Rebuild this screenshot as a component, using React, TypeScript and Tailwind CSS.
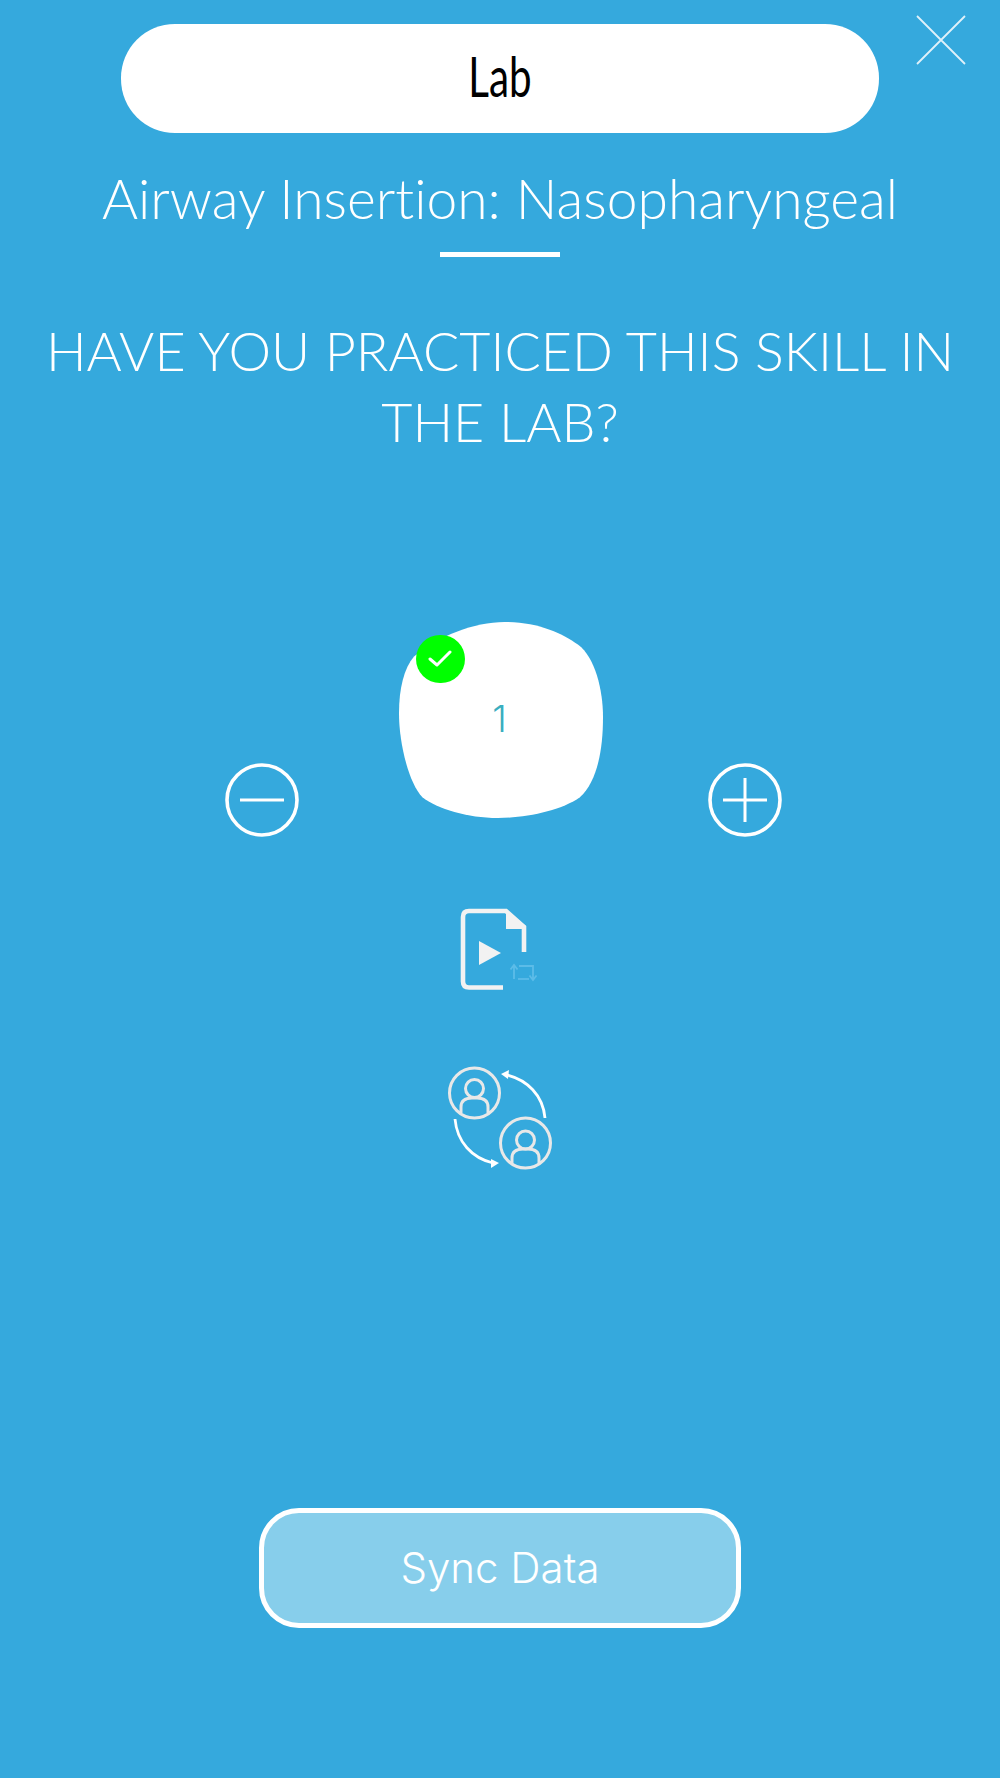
export default function App() {
  return (
    <div className="relative w-[1000px] h-[1778px] bg-[#35a9dd] flex flex-col items-center text-white font-['Lato',sans-serif] overflow-hidden [font-variant-ligatures:none]">
      <svg className="absolute left-[916px] top-[15px]" width="50" height="50" viewBox="0 0 50 50" fill="none" stroke="#dff1fa" strokeWidth="1.8">
        <path d="M1 1 L49 49 M49 1 L1 49" />
      </svg>
      <div className="mt-[24px] w-[758px] h-[109px] rounded-[54px] bg-white flex items-center justify-center">
        <span className="text-black text-[56px] leading-none font-normal scale-x-[0.72] -translate-y-[3px]">Lab</span>
      </div>
      <h1 className="mt-[28px] text-[55.2px] leading-[74px] font-light whitespace-nowrap">Airway Insertion: Nasopharyngeal</h1>
      <div className="mt-[17px] w-[120px] h-[5px] bg-white" />
      <h2 className="mt-[58px] w-[930px] text-center text-[53.8px] leading-[71px] font-light">HAVE YOU PRACTICED THIS SKILL IN THE LAB?</h2>
      <div className="mt-[165px] flex items-start translate-x-[3px]">
        <svg className="mt-[141px] mr-[100px]" width="74" height="74" viewBox="0 0 74 74" fill="none" stroke="#fff" strokeWidth="3.6">
          <circle cx="37" cy="37" r="35" />
          <path d="M15 37 H59" strokeWidth="3" />
        </svg>
        <div className="relative w-[204px] h-[196px] flex items-center justify-center">
          <svg className="absolute left-0 top-0" width="204" height="196" viewBox="55 67 609 585" preserveAspectRatio="none">
            <path fill="#fff" d="M370 67 C 470 67, 540 100, 590 135 C 640 172, 664 270, 664 350 C 664 440, 650 540, 595 590 C 540 630, 430 652, 350 652 C 260 652, 170 625, 125 590 C 85 550, 55 430, 55 340 C 55 265, 70 205, 100 170 C 170 110, 280 67, 370 67 Z" />
          </svg>
          <span className="relative text-[37px] leading-none font-['Inter',sans-serif] font-light text-[#3aaebf] -translate-x-[1px] -translate-y-[2px]">1</span>
          <div className="absolute left-[17px] top-[13px] w-[49px] h-[48px] rounded-full bg-[#00ff00] flex items-center justify-center">
            <svg width="24" height="18" viewBox="0 0 24 18" fill="none" stroke="#fff" strokeWidth="3" strokeLinecap="round" strokeLinejoin="round">
              <path d="M2 9 L9 15 L22 2" />
            </svg>
          </div>
        </div>
        <svg className="mt-[141px] ml-[105px]" width="74" height="74" viewBox="0 0 74 74" fill="none" stroke="#fff" strokeWidth="3.6">
          <circle cx="37" cy="37" r="35" />
          <path d="M15 37 H59 M37 15 V59" strokeWidth="3" />
        </svg>
      </div>
      <svg className="mt-[53px]" width="140" height="110" viewBox="0 0 140 110" fill="none">
        <path d="M73 97.5 H39 Q33 97.5 33 91.5 V27 Q33 21 39 21 H76 L94 37 V62" stroke="#f2f2f2" strokeWidth="4.6" />
        <path d="M76 20 V39 H96 V36 Z" fill="#f2f2f2" />
        <path d="M49 51 V75 L71 63 Z" fill="#f2f2f2" />
        <g stroke="#5cbce8" strokeWidth="1.8">
          <path d="M84 89 V76 M80.5 79.5 L84 75 L87.5 79.5" />
          <path d="M89 76 H103 V89 M99.5 85.5 L103 90 L106.5 85.5" />
          <path d="M88 89 H99" />
        </g>
      </svg>
      <svg className="mt-[50px]" width="140" height="130" viewBox="0 0 140 130" fill="none">
        <g stroke="#e8e8e8" strokeWidth="3">
          <circle cx="44.5" cy="43" r="25" />
          <circle cx="44.5" cy="38.5" r="9" />
          <path d="M31 63 V57 Q31 48 42 48 H47 Q58 48 58 57 V63" />
          <circle cx="95.5" cy="93" r="25" />
          <circle cx="95.5" cy="90" r="9" />
          <path d="M82 114 V108 Q82 99 93 99 H98 Q109 99 109 108 V114" />
        </g>
        <path d="M115 68 C113 45 97 30 77 25" stroke="#fff" strokeWidth="2.8" />
        <path d="M71 24 L79 20 L78 29 Z" fill="#fff" />
        <path d="M25 69 C27 92 42 108 63 113" stroke="#fff" strokeWidth="2.8" />
        <path d="M69 113 L61 109 L61 118 Z" fill="#fff" />
      </svg>
      <div className="mt-[328px] w-[482px] h-[120px] rounded-[40px] border-[5px] border-white bg-[#87ceeb] flex items-center justify-center">
        <span className="text-[42px] leading-none font-['Inter',sans-serif] font-[350]">Sync Data</span>
      </div>
    </div>
  );
}
